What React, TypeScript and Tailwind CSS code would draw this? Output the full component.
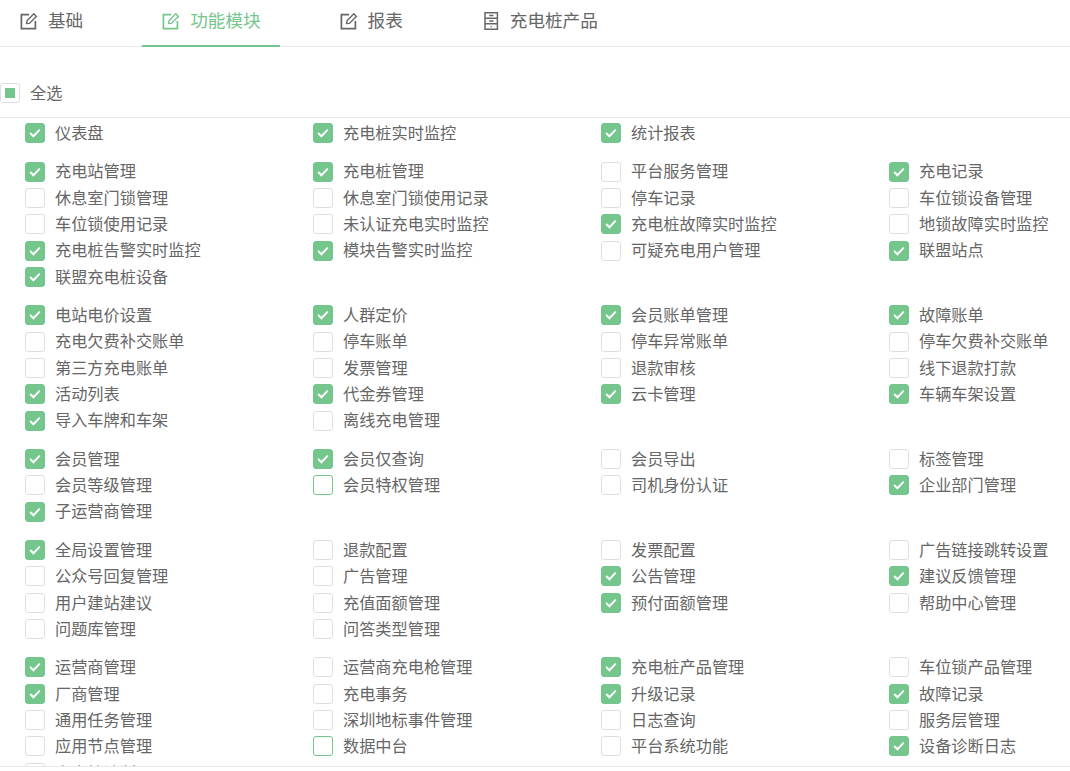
import React from "react";

type Item = [string, boolean, boolean?];

const groups: Item[][] = [
  [["仪表盘", true], ["充电桩实时监控", true], ["统计报表", true]],
  [
    ["充电站管理", true], ["充电桩管理", true], ["平台服务管理", false], ["充电记录", true],
    ["休息室门锁管理", false], ["休息室门锁使用记录", false], ["停车记录", false], ["车位锁设备管理", false],
    ["车位锁使用记录", false], ["未认证充电实时监控", false], ["充电桩故障实时监控", true], ["地锁故障实时监控", false],
    ["充电桩告警实时监控", true], ["模块告警实时监控", true], ["可疑充电用户管理", false], ["联盟站点", true],
    ["联盟充电桩设备", true],
  ],
  [
    ["电站电价设置", true], ["人群定价", true], ["会员账单管理", true], ["故障账单", true],
    ["充电欠费补交账单", false], ["停车账单", false], ["停车异常账单", false], ["停车欠费补交账单", false],
    ["第三方充电账单", false], ["发票管理", false], ["退款审核", false], ["线下退款打款", false],
    ["活动列表", true], ["代金券管理", true], ["云卡管理", true], ["车辆车架设置", true],
    ["导入车牌和车架", true], ["离线充电管理", false],
  ],
  [
    ["会员管理", true], ["会员仅查询", true], ["会员导出", false], ["标签管理", false],
    ["会员等级管理", false], ["会员特权管理", false, true], ["司机身份认证", false], ["企业部门管理", true],
    ["子运营商管理", true],
  ],
  [
    ["全局设置管理", true], ["退款配置", false], ["发票配置", false], ["广告链接跳转设置", false],
    ["公众号回复管理", false], ["广告管理", false], ["公告管理", true], ["建议反馈管理", true],
    ["用户建站建议", false], ["充值面额管理", false], ["预付面额管理", true], ["帮助中心管理", false],
    ["问题库管理", false], ["问答类型管理", false],
  ],
  [
    ["运营商管理", true], ["运营商充电枪管理", false], ["充电桩产品管理", true], ["车位锁产品管理", false],
    ["厂商管理", true], ["充电事务", false], ["升级记录", true], ["故障记录", true],
    ["通用任务管理", false], ["深圳地标事件管理", false], ["日志查询", false], ["服务层管理", false],
    ["应用节点管理", false], ["数据中台", false, true], ["平台系统功能", false], ["设备诊断日志", true],
    ["充电桩诊断记录", false],
  ],
];

const EditIcon = () => (
  <svg width="18" height="18" viewBox="0 0 18 18" fill="none" stroke="currentColor" strokeWidth="1.7">
    <path d="M9 2.6H1.4v14h14V9" />
    <path d="M6.6 11.6l.4-2.8L13.8 1.8l2.6 2.6-7 7z" strokeWidth="1.4" />
  </svg>
);

const CabinetIcon = () => (
  <svg width="18" height="18" viewBox="0 0 18 18" fill="none" stroke="currentColor" strokeWidth="1.5">
    <path d="M3 .8h12.4v16.4H3z" />
    <path d="M3 6.2h12.4M3 11.8h12.4M7.2 3.6h4.2M7.2 9h4.2" />
    <path d="M9.2 14.2v1" />
  </svg>
);

const tabs = [
  { label: "基础", icon: <EditIcon />, active: false },
  { label: "功能模块", icon: <EditIcon />, active: true },
  { label: "报表", icon: <EditIcon />, active: false },
  { label: "充电桩产品", icon: <CabinetIcon />, active: false },
];

const Box = ({ checked, focus }: { checked: boolean; focus?: boolean }) => (
  <span
    className={`flex h-5 w-5 shrink-0 items-center justify-center rounded-[3px] border ${
      checked ? "border-[#74c68c] bg-[#74c68c]" : focus ? "border-[#74c68c] bg-white" : "border-[#dcdfe6] bg-white"
    }`}
  >
    {checked && (
      <svg width="12" height="10" viewBox="0 0 12 10" fill="none" stroke="white" strokeWidth="2">
        <path d="M1.2 5l3.2 3.2L10.8 1.6" />
      </svg>
    )}
  </span>
);

export default function App() {
  return (
    <div
      className="h-[771px] w-[1070px] overflow-hidden bg-white text-[#666]"
      style={{ fontFamily: '"Noto Sans CJK SC", "Noto Sans", sans-serif' }}
    >
      <div className="flex h-[47px] gap-10 border-b border-[#e8e8e8]">
        {tabs.map((t) => (
          <div
            key={t.label}
            className={`relative flex items-center gap-[10px] pb-[5px] pl-5 pr-[19px] text-[17.6px] ${
              t.active ? "text-[#74c68c]" : "text-[#666]"
            }`}
          >
            {t.icon}
            <span>{t.label}</span>
            {t.active && <div className="absolute -bottom-px left-0 right-0 h-[2px] bg-[#74c68c]" />}
          </div>
        ))}
      </div>

      <div className="flex h-[71px] items-center gap-[10px] border-b border-[#e8e8e8] pt-[22px] text-[16.2px]">
        <span className="flex h-5 w-5 items-center justify-center rounded-[3px] border border-[#dcdfe6]">
          <span className="h-[10px] w-[10px] bg-[#74c68c]" />
        </span>
        <span className="mb-[2px]">全选</span>
      </div>

      <div className="h-[649px] overflow-hidden border-b border-[#e8e8e8] pl-[25px] pt-[2px]">
        {groups.map((g, i) => (
          <div key={i} className="mb-[12px] grid grid-cols-[288px_288px_288px_180px]">
            {g.map(([label, checked, focus]) => (
              <label key={label} className="flex h-[26.35px] items-center gap-[10px] whitespace-nowrap text-[16.2px]">
                <Box checked={checked} focus={focus} />
                <span className="mb-[2px]">{label}</span>
              </label>
            ))}
          </div>
        ))}
      </div>
    </div>
  );
}
